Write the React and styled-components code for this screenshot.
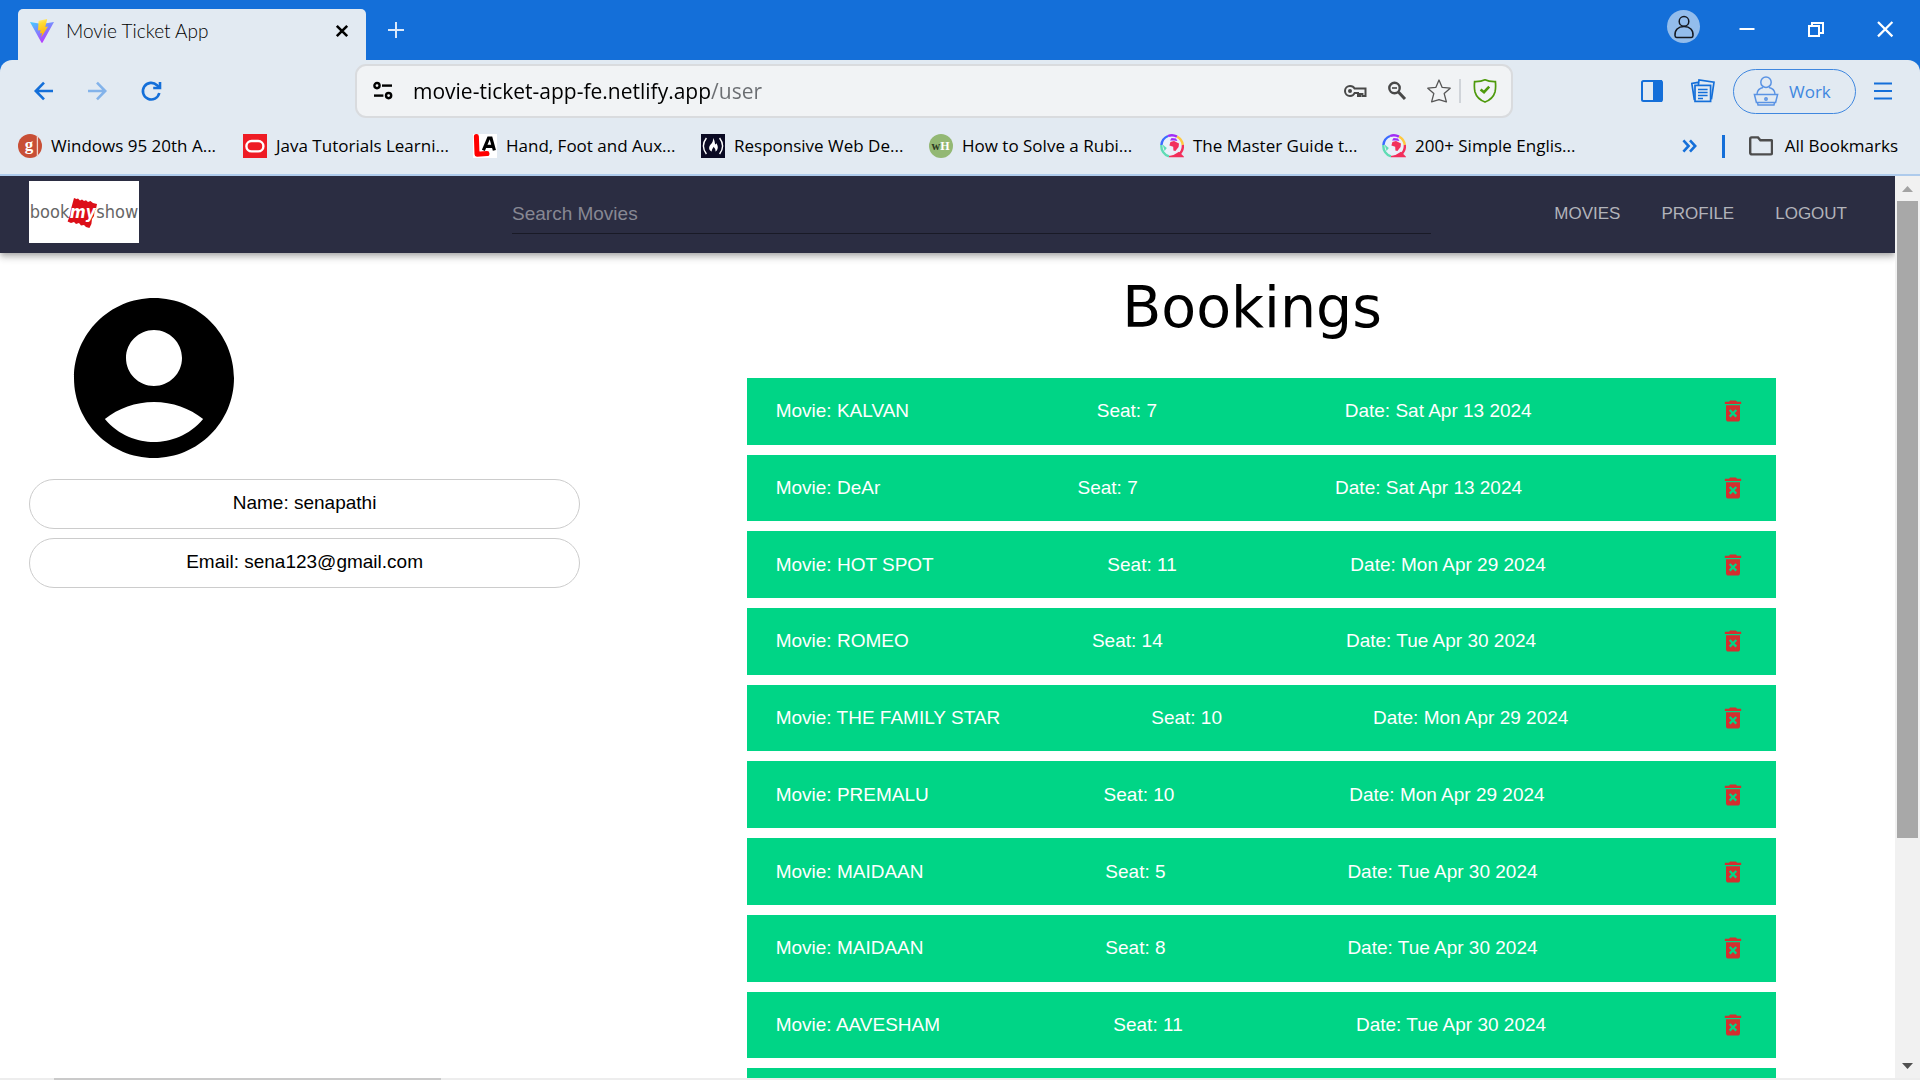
import React from "react";
import styled, { createGlobalStyle } from "styled-components";

const BLUE = "#146fd9";
const CHROME = "#e2eaf2";
const UI = '"Open Sans", "Noto Sans", sans-serif';
const ARIAL = '"Liberation Sans", Arial, sans-serif';

const GlobalStyle = createGlobalStyle`
  *, *::before, *::after { box-sizing: border-box; }
  html, body { margin: 0; padding: 0; }
  body { background: #fff; overflow: hidden; font-family: ${ARIAL}; color: #000; }
  button { border: 0; background: none; padding: 0; margin: 0; font: inherit; color: inherit; cursor: pointer; }
  a { color: inherit; text-decoration: none; }
  svg { display: block; flex: none; }
`;

const Window = styled.div`
  display: flex;
  flex-direction: column;
  height: 100vh;
`;

/* ---------- browser frame ---------- */

const Frame = styled.header`
  flex: none;
  background: ${BLUE};
  font-family: ${UI};
`;

const TabStrip = styled.div`
  display: flex;
  align-items: flex-end;
  height: 60px;
  padding-left: 18px;
`;

const Tab = styled.div`
  display: flex;
  align-items: center;
  width: 348px;
  height: 51px;
  padding: 0 17px 8px 12px;
  gap: 12px;
  background: ${CHROME};
  border-radius: 5px 5px 0 0;
`;

const TabTitle = styled.span`
  flex: 1;
  font-family: Lato, ${UI};
  font-size: 19px;
  font-weight: 300;
  line-height: 24px;
`;

const IconButton = styled.button`
  display: flex;
  align-items: center;
  justify-content: center;
  flex: none;
  width: ${(p) => p.$size || 24}px;
  height: ${(p) => p.$size || 24}px;
  color: ${(p) => p.$color || "inherit"};
`;

const NewTab = styled(IconButton)`
  margin: 0 0 18px 18px;
`;

const WindowControls = styled.div`
  display: flex;
  align-items: flex-start;
  align-self: flex-start;
  margin-left: auto;
  padding: 10px 23px 0 0;
`;

const Controls = styled.div`
  display: flex;
  gap: 45px;
  padding: 7px 0 0 35px;
`;

const ProfileBadge = styled.button`
  display: flex;
  align-items: center;
  justify-content: center;
  width: 33px;
  height: 33px;
  border-radius: 50%;
  background: #93bdec;
`;

const Bars = styled.div`
  background: ${CHROME};
  border-radius: 12px 12px 0 0;
  border-bottom: 2px solid #aecbec;
  padding-bottom: 4px;
`;

const Toolbar = styled.div`
  display: grid;
  grid-template-columns: 355px 1fr 407px;
  align-items: center;
  height: 62px;
`;

const NavButtons = styled.div`
  display: flex;
  gap: 30px;
  padding-left: 31px;
`;

const AddressBar = styled.div`
  display: flex;
  align-items: center;
  height: 54px;
  padding: 0 14px 0 16px;
  background: #f1f3f5;
  border: 2px solid #d9dbde;
  border-radius: 11px;
`;

const Url = styled.input`
  flex: 1;
  min-width: 0;
  height: 32px;
  margin-left: 20px;
  padding: 0;
  border: 0;
  outline: 0;
  font-family: ${UI};
  font-size: 21px;
  color: transparent;
  background: linear-gradient(90deg, #000 298px, #6a6d71 298px);
  -webkit-background-clip: text;
  background-clip: text;
`;

const AddressActions = styled.div`
  display: flex;
  align-items: center;
  gap: 18px;
`;

const ShieldSlot = styled.div`
  display: flex;
  align-items: center;
  height: 24px;
  margin-left: 8px;
  padding-left: 12px;
  border-left: 2px solid #d0d4d9;
`;

const RightTools = styled.div`
  display: flex;
  align-items: center;
  justify-content: flex-end;
  padding-right: 27px;
  color: ${BLUE};
`;

const ToolPair = styled.div`
  display: flex;
  gap: 26px;
  margin-right: 18px;
`;

const WorkButton = styled.button`
  display: flex;
  align-items: center;
  gap: 10px;
  width: 123px;
  height: 45px;
  margin-right: 17px;
  padding-left: 19px;
  border: 1px solid #3f87df;
  border-radius: 23px;
  color: #3f87df;
  font-size: 17px;
`;

const BookmarksBar = styled.nav`
  display: flex;
  align-items: center;
  height: 48px;
  padding: 0 22px 0 18px;
`;

const Bookmark = styled.a`
  display: flex;
  align-items: center;
  gap: 9px;
  width: ${(p) => p.$width}px;
  font-size: 17px;
  line-height: 24px;
  white-space: nowrap;
`;

const BookmarksEnd = styled.div`
  display: flex;
  align-items: center;
  margin-left: auto;
  color: ${BLUE};
`;

const Separator = styled.span`
  width: 3px;
  height: 23px;
  margin: 0 24px;
  background: ${BLUE};
`;

const AllBookmarks = styled.button`
  display: flex;
  align-items: center;
  gap: 12px;
  color: #000;
  font-size: 17px;
  line-height: 24px;
`;

/* ---------- web page ---------- */

const Viewport = styled.div`
  display: flex;
  flex: 1;
  min-height: 0;
`;

const Page = styled.div`
  flex: 1;
  min-width: 0;
  overflow: hidden;
`;

const AppBar = styled.div`
  display: flex;
  align-items: center;
  height: 77px;
  padding: 0 48px 0 29px;
  background: #2b2d42;
  box-shadow: 0 2px 5px -1px rgba(0, 0, 0, 0.2), 0 5px 6px rgba(0, 0, 0, 0.14),
    0 1px 12px rgba(0, 0, 0, 0.12);
`;

const Logo = styled.a`
  display: flex;
  align-items: center;
  justify-content: center;
  flex: none;
  width: 110px;
  height: 62px;
  margin-bottom: 5px;
  background: #fff;
  color: #666;
  font-family: "Liberation Sans Narrow", "DejaVu Sans Condensed", sans-serif;
  font-size: 18px;
  line-height: 24px;
`;

const LogoTicket = styled.span`
  position: relative;
  display: flex;
  justify-content: center;
  width: 27px;
  color: #fff;
  font-weight: 700;
  font-style: italic;
  font-size: 17px;

  svg { position: absolute; left: -2px; top: -3px; }
  span { position: relative; }
`;

const SearchField = styled.label`
  display: flex;
  flex: 1;
  margin: 0 123px 0 373px;
`;

const SearchInput = styled.input`
  width: 100%;
  height: 38px;
  padding: 0;
  border: 0;
  border-bottom: 1px solid #191a26;
  outline: 0;
  background: none;
  color: #fff;
  font-family: ${ARIAL};
  font-size: 19px;

  &::placeholder { color: #878893; opacity: 1; }
`;

const Menu = styled.nav`
  display: flex;
  gap: 41px;
  padding-bottom: 2px;
  font-size: 17px;
  line-height: 28px;
  color: #b2b3ba;
`;

const Content = styled.main`
  display: grid;
  grid-template-columns: 9fr 19fr;
`;

const ProfilePanel = styled.section`
  padding: 29px;
`;

const AvatarIcon = styled.svg`
  width: 192px;
  height: 192px;
  margin: 0 0 5px 29px;
`;

const InfoPill = styled.p`
  height: 50px;
  margin: 0 0 9px;
  padding-top: 9px;
  border: 1px solid #ccc;
  border-radius: 25px;
  font-size: 19px;
  line-height: 28px;
  text-align: center;
`;

const BookingsPanel = styled.section`
  padding-top: 20px;
`;

const Heading = styled.h1`
  margin: 0 0 37px;
  font-family: "DejaVu Sans", Verdana, sans-serif;
  font-size: 57px;
  font-weight: 400;
  line-height: 68px;
  text-align: center;
`;

const BookingList = styled.ul`
  display: grid;
  grid-auto-rows: 1fr;
  gap: 10px;
  width: calc(80% + 1px);
  min-height: 757px;
  margin: 0 0 0 calc(10% + 9px);
  padding: 0;
  list-style: none;
`;

const BookingRow = styled.li`
  display: flex;
  align-items: center;
  justify-content: space-between;
  padding: 0 29px;
  background: #00d586;
  color: #fff;
  font-size: 19px;
`;

const Cell = styled.span`
  line-height: 28px;
`;

const ScrollTrack = styled.div`
  display: flex;
  flex-direction: column;
  align-items: center;
  flex: none;
  width: 25px;
  background: #f1f1f1;
`;

const ScrollThumb = styled.div`
  width: 21px;
  flex: 637 1 0;
  background: #a8a8a8;
`;

const ScrollRest = styled.div`
  flex: 215 1 0;
`;

const Taskbar = styled.div`
  flex: none;
  height: 2px;
  padding-left: 54px;
  background: #ededed;
`;

const TaskSearch = styled.div`
  width: 387px;
  height: 2px;
  background: #cacaca;
`;

/* ---------- icons ---------- */

const Line = ({ s = 24, w = 2, children, ...rest }) => (
  <svg width={s} height={s} viewBox={`0 0 ${s} ${s}`} fill="none" stroke="currentColor" strokeWidth={w} aria-hidden="true" {...rest}>
    {children}
  </svg>
);

const ViteIcon = () => (
  <svg width="24" height="24" viewBox="0 0 24 24" aria-hidden="true">
    <defs>
      <linearGradient id="va" x1="0" y1="0" x2="0.6" y2="1"><stop stopColor="#41d1ff" /><stop offset="1" stopColor="#bd34fe" /></linearGradient>
      <linearGradient id="vb" x1="0.4" y1="0" x2="0.6" y2="1"><stop stopColor="#ffea83" /><stop offset="0.2" stopColor="#ffdd35" /><stop offset="1" stopColor="#ffa800" /></linearGradient>
    </defs>
    <path d="M0 3 L12 5 L24 3 L12.6 23.6 Q12 24.4 11.4 23.6 Z" fill="url(#va)" />
    <path d="M17.2 0 L8.6 1.7 L8 11.5 L10.6 11 L9.9 14.6 L12 14 L11.2 18.4 L18 7.6 L15.3 8 Z" fill="url(#vb)" />
  </svg>
);

const ReloadIcon = () => (
  <Line w={2.6}>
    <path d="M20.3 14 A8.3 8.3 0 1 1 18 6.2 L20 8.2" />
    <path d="M21 3 V9 H14.2" />
  </Line>
);

const TuneIcon = () => (
  <Line s={20} w={2.4}>
    <circle cx="4" cy="4.6" r="2.6" /><path d="M9 4.6 H19" />
    <circle cx="15.6" cy="14.6" r="2.6" /><path d="M1 14.6 H10.4" />
  </Line>
);

const KeyIcon = () => (
  <Line w={2}>
    <path d="M7 7 a5 5 0 1 0 0 10 c2.2 0 3.8-1 4.6-3 H15 v3 h2 v-2 h2.4 v2 H22.5 V9.6 H11.6 C10.8 8 9.2 7 7 7 Z" />
    <circle cx="7" cy="12" r="1" fill="currentColor" />
  </Line>
);

const ZoomOutIcon = () => (
  <Line w={2.4}>
    <circle cx="9.5" cy="9" r="5.2" /><path d="M7 9 H12" strokeWidth="1.6" /><path d="M13.4 13 L20 20" strokeWidth="3" />
  </Line>
);

const StarIcon = () => (
  <Line w={1.3}>
    <path d="M12 1 L15.2 8.4 L23.2 9.2 L17.2 14.6 L19.4 22.8 L12 20.6 L4.6 22.8 L6.8 14.6 L0.8 9.2 L8.8 8.4 Z" strokeLinejoin="round" />
  </Line>
);

const ShieldIcon = () => (
  <Line w={1.7}>
    <path d="M12 0.8 Q16 2.8 22.4 2.6 Q23 9 22 13 Q20 20 12 23 Q4 20 2 13 Q1 9 1.6 2.6 Q8 2.8 12 0.8 Z" />
    <path d="M7.6 10.4 L11 13.2 L16.2 7.6" strokeWidth="2.6" />
  </Line>
);

const SidebarIcon = () => (
  <Line w={2}>
    <rect x="1" y="2" width="20" height="20" rx="1.5" /><path d="M13 2 H20 V22 H13 Z" fill="currentColor" />
  </Line>
);

const ReadingIcon = () => (
  <Line w={1.7}>
    <rect x="4" y="6.4" width="15.6" height="16" /><path d="M3.4 21 L0.8 4.4 L7 3.4 M7.4 6 L8 1 L23 3.2 L20.4 20.4" />
    <path d="M7 10.4 H16.6 M7 13.4 H16.6 M7 16.4 H16.6 M7 19.4 H12" strokeWidth="1.5" />
  </Line>
);

const WorkIcon = () => (
  <svg width="26" height="30" viewBox="0 0 26 30" fill="none" stroke="#5a93e4" strokeWidth="1.5" aria-hidden="true">
    <circle cx="13" cy="6.2" r="5.2" />
    <path d="M4 17.8 C4.4 14 7 12 10 11.4 M16 11.4 C19 12 21.6 14 22 17.8" />
    <path d="M1.4 18.4 H24.6 L22.6 26.4 H3.4 Z M4.4 26.4 L5 29 H21 L21.6 26.4" />
    <circle cx="13" cy="23" r="1.2" />
  </svg>
);

const FolderIcon = () => (
  <Line w={2.4} stroke="#4d4d4d">
    <path d="M2.6 3.4 H9 L11.4 6.2 H22.4 Q23 6.2 23 7 V19 Q23 20.4 21.4 20.4 H3 Q1.2 20.4 1.2 18.8 V5 Q1.2 3.4 2.6 3.4 Z" />
  </Line>
);

const DeleteIcon = () => (
  <svg width="28" height="28" viewBox="0 0 24 24" fill="#d32f2f" aria-hidden="true">
    <path d="M6 19c0 1.1.9 2 2 2h8c1.1 0 2-.9 2-2V7H6zm2.46-7.12 1.41-1.41L12 12.59l2.12-2.12 1.41 1.41L13.41 14l2.12 2.12-1.41 1.41L12 15.41l-2.12 2.12-1.41-1.41L10.59 14zM15.5 4l-1-1h-5l-1 1H5v2h14V4z" />
  </svg>
);

const svg24 = { width: 24, height: 24, viewBox: "0 0 24 24", "aria-hidden": true };

const GoodIcon = () => (
  <svg {...svg24}>
    <circle cx="12" cy="12" r="12" fill="#c84f36" />
    <path d="M19.4 1.5 V22.5" stroke="#f0d2ca" strokeWidth="1.3" />
    <text x="11" y="16" fill="#fff" fontFamily="Liberation Serif, serif" fontSize="17" fontWeight="700" textAnchor="middle">g</text>
  </svg>
);
const OracleIcon = () => (
  <svg {...svg24}><rect width="24" height="24" fill="#ee1c25" /><rect x="3.4" y="7" width="17" height="10.4" rx="5.2" fill="none" stroke="#fff" strokeWidth="2.4" /></svg>
);
const LAIcon = () => (
  <svg {...svg24}>
    <rect width="24" height="24" fill="#fff" />
    <path d="M3.4 2.6 L4 20.2 L14 19.6" stroke="#f00" strokeWidth="5" fill="none" strokeLinecap="round" strokeLinejoin="round" />
    <path d="M10.4 16.4 L15.6 4 H18 L21.4 16.4 M12.6 12.4 H20" stroke="#000" strokeWidth="3.2" fill="none" />
  </svg>
);
const CampIcon = () => (
  <svg {...svg24}>
    <rect width="24" height="24" fill="#0a0a23" />
    <path d="M5.4 4 Q-0.6 12 5.4 20 M18.6 4 Q24.6 12 18.6 20" stroke="#fff" strokeWidth="1.4" fill="none" />
    <path d="M12 4 C14.4 7.4 13.4 9.4 14.6 10.6 C15.4 10 15 9 15 9 C17.6 11.6 17.4 16 14.4 17.6 C15 15.4 13.4 14 12.6 12.8 C12.4 14.4 10.4 15 10.8 17.6 C7.6 16.4 7.4 13 9.6 10.6 C11.4 8.6 12.4 7 12 4 Z" fill="#fff" />
  </svg>
);
const WikiIcon = () => (
  <svg {...svg24}>
    <circle cx="12" cy="12" r="12" fill="#93b874" />
    <text x="2.6" y="16" fontFamily="Liberation Serif, serif" fontWeight="700" fontSize="12" fill="#2c3a22">w</text>
    <text x="11.2" y="16" fontFamily="Liberation Serif, serif" fontWeight="700" fontSize="12" fill="#fff">H</text>
  </svg>
);
const GlobeIcon = () => (
  <svg {...svg24} fill="none" strokeWidth="2.4">
    <circle cx="12" cy="12" r="10" fill="#eaf0fa" stroke="none" />
    <path d="M1.4 11 A10.8 10.8 0 0 1 8 2" stroke="#3b6bff" />
    <path d="M8 2 A10.8 10.8 0 0 1 17 2.6" stroke="#a02df5" />
    <path d="M17 2.6 A10.8 10.8 0 0 1 22.8 11" stroke="#ffc940" />
    <path d="M22.8 11 A10.8 10.8 0 0 1 19 20.4" stroke="#f22f5c" />
    <path d="M1.4 11 A10.8 10.8 0 0 0 9 22.4" stroke="#5fdcb4" />
    <path d="M9 22.6 H22.8 L19 18.6 Q15 22 9 22.6" fill="#f22f5c" stroke="#f22f5c" strokeWidth="1.4" />
    <path d="M10.4 8 L14 7 L19 9.4 L18.6 13 L15.4 17 L13.4 16.4 L13.2 12.8 L9.4 11.6 Z" fill="#f22f5c" />
    <path d="M10 6.6 L11.6 4 L16 4.4 L17.4 7 L14 6.4 Z" fill="#a02df5" />
    <path d="M2.6 10.6 L6.8 14 L4.6 17 Z" fill="#5fdcb4" />
  </svg>
);

/* ---------- data ---------- */

const BOOKMARKS = [
  { text: "Windows 95 20th A...", Icon: GoodIcon, width: 225 },
  { text: "Java Tutorials Learni...", Icon: OracleIcon, width: 230 },
  { text: "Hand, Foot and Aux...", Icon: LAIcon, width: 228 },
  { text: "Responsive Web De...", Icon: CampIcon, width: 228 },
  { text: "How to Solve a Rubi...", Icon: WikiIcon, width: 231 },
  { text: "The Master Guide t...", Icon: GlobeIcon, width: 222 },
  { text: "200+ Simple Englis...", Icon: GlobeIcon, width: 222 },
];

const BOOKINGS = [
  ["KALVAN", 7, "Sat Apr 13 2024"],
  ["DeAr", 7, "Sat Apr 13 2024"],
  ["HOT SPOT", 11, "Mon Apr 29 2024"],
  ["ROMEO", 14, "Tue Apr 30 2024"],
  ["THE FAMILY STAR", 10, "Mon Apr 29 2024"],
  ["PREMALU", 10, "Mon Apr 29 2024"],
  ["MAIDAAN", 5, "Tue Apr 30 2024"],
  ["MAIDAAN", 8, "Tue Apr 30 2024"],
  ["AAVESHAM", 11, "Tue Apr 30 2024"],
];

const BrowserFrame = () => (
  <Frame>
    <TabStrip>
      <Tab>
        <ViteIcon />
        <TabTitle>Movie Ticket App</TabTitle>
        <IconButton $size={14} aria-label="Close tab">
          <Line s={14} w={2.6}><path d="M1.8 1.8 L12.2 12.2 M12.2 1.8 L1.8 12.2" /></Line>
        </IconButton>
      </Tab>
      <NewTab $color="#dbe9fa" aria-label="New tab">
        <Line w={2}><path d="M12 4 V20 M4 12 H20" /></Line>
      </NewTab>
      <WindowControls>
        <ProfileBadge aria-label="Account">
          <Line w={1.5} stroke="#14181f">
            <circle cx="12" cy="6.4" r="4.8" /><path d="M3 20.6 C2.6 15 6 11.6 12 11.6 S21.4 15 21 20.6 Q21 22.4 19.4 22.4 H4.6 Q3 22.4 3 20.6 Z" />
          </Line>
        </ProfileBadge>
        <Controls>
          <IconButton $color="#fff" aria-label="Minimize"><Line><path d="M4.5 12 H19.5" /></Line></IconButton>
          <IconButton $color="#fff" aria-label="Restore"><Line><path d="M5 9 H15 V19 H5 Z M8 8 V6 H19 V16 H16" /></Line></IconButton>
          <IconButton $color="#fff" aria-label="Close"><Line w={2.2}><path d="M5 5 L19.4 19.4 M19.4 5 L5 19.4" /></Line></IconButton>
        </Controls>
      </WindowControls>
    </TabStrip>
    <Bars>
      <Toolbar>
        <NavButtons>
          <IconButton $color={BLUE} aria-label="Back"><Line w={2.6}><path d="M22 12 H5 M13 3.6 L4.8 12 L13 20.4" /></Line></IconButton>
          <IconButton $color="#83b3ea" aria-label="Forward"><Line w={2.6}><path d="M3 12 H20 M12 3.6 L20.2 12 L12 20.4" /></Line></IconButton>
          <IconButton $color={BLUE} aria-label="Reload"><ReloadIcon /></IconButton>
        </NavButtons>
        <AddressBar>
          <IconButton $size={20} aria-label="Site information"><TuneIcon /></IconButton>
          <Url aria-label="Address" defaultValue="movie-ticket-app-fe.netlify.app/user" spellCheck="false" />
          <AddressActions>
            <IconButton $color="#484848" aria-label="Passwords"><KeyIcon /></IconButton>
            <IconButton $color="#484848" aria-label="Zoom"><ZoomOutIcon /></IconButton>
            <IconButton $color="#555" aria-label="Bookmark this page"><StarIcon /></IconButton>
          </AddressActions>
          <ShieldSlot>
            <IconButton $color="#4e9a0c" aria-label="Secure page"><ShieldIcon /></IconButton>
          </ShieldSlot>
        </AddressBar>
        <RightTools>
          <ToolPair>
            <IconButton aria-label="Side panel"><SidebarIcon /></IconButton>
            <IconButton aria-label="Reading list"><ReadingIcon /></IconButton>
          </ToolPair>
          <WorkButton><WorkIcon />Work</WorkButton>
          <IconButton $size={20} aria-label="Menu"><Line s={20}><path d="M1 2.5 H19 M1 10 H19 M1 17.5 H19" /></Line></IconButton>
        </RightTools>
      </Toolbar>
      <BookmarksBar aria-label="Bookmarks">
        {BOOKMARKS.map(({ text, Icon, width }) => (
          <Bookmark key={text} href="#" $width={width}><Icon />{text}</Bookmark>
        ))}
        <BookmarksEnd>
          <IconButton $size={16} aria-label="More bookmarks">
            <Line s={16} w={2.6}><path d="M1.4 2.4 L6.6 8 L1.4 13.6 M8 2.4 L13.2 8 L8 13.6" /></Line>
          </IconButton>
          <Separator />
          <AllBookmarks><FolderIcon />All Bookmarks</AllBookmarks>
        </BookmarksEnd>
      </BookmarksBar>
    </Bars>
  </Frame>
);

const SiteHeader = () => (
  <AppBar>
    <Logo href="#" aria-label="bookmyshow">
      <span>book</span>
      <LogoTicket>
        <svg width="31" height="32" viewBox="0 0 31 32" aria-hidden="true">
          <path d="M7 1 L9.5 2 L11 1.4 L13 3.4 L15 2.4 L17 4 L19 3.2 L21 5 L23.4 4 L26 6 L30 7 L29 12 L27.6 14 L27 19 L25 22 L24.4 27 L22.4 31 L19 30 L17 28 L14 28.6 L12 26 L9 27 L7 25 L4 26 L0.6 24.4 L3 18 L4 12 Z" fill="#dc0f18" />
        </svg>
        <span>my</span>
      </LogoTicket>
      <span>show</span>
    </Logo>
    <SearchField>
      <SearchInput type="text" placeholder="Search Movies" aria-label="Search Movies" />
    </SearchField>
    <Menu aria-label="Site">
      <a href="#">MOVIES</a>
      <a href="#">PROFILE</a>
      <a href="#">LOGOUT</a>
    </Menu>
  </AppBar>
);

export default function App() {
  return (
    <Window>
      <GlobalStyle />
      <BrowserFrame />
      <Viewport>
        <Page>
          <SiteHeader />
          <Content>
            <ProfilePanel>
              <AvatarIcon viewBox="0 0 24 24" aria-hidden="true">
                <path d="M12 2C6.48 2 2 6.48 2 12s4.48 10 10 10 10-4.48 10-10S17.52 2 12 2m0 4c1.93 0 3.5 1.57 3.5 3.5S13.93 13 12 13s-3.5-1.57-3.5-3.5S10.07 6 12 6m0 14c-2.03 0-4.43-.82-6.14-2.88C7.55 15.8 9.68 15 12 15s4.45.8 6.14 2.12C16.43 19.18 14.03 20 12 20" />
              </AvatarIcon>
              <InfoPill>Name: senapathi</InfoPill>
              <InfoPill>Email: sena123@gmail.com</InfoPill>
            </ProfilePanel>
            <BookingsPanel>
              <Heading>Bookings</Heading>
              <BookingList>
                {BOOKINGS.map(([movie, seat, date], i) => (
                  <BookingRow key={i}>
                    <Cell>Movie: {movie}</Cell>
                    <Cell>Seat: {seat}</Cell>
                    <Cell>Date: {date}</Cell>
                    <IconButton $size={28} aria-label={`Delete ${movie}`}><DeleteIcon /></IconButton>
                  </BookingRow>
                ))}
                <BookingRow />
              </BookingList>
            </BookingsPanel>
          </Content>
        </Page>
        <ScrollTrack>
          <svg width="25" height="25" viewBox="0 0 25 25" aria-hidden="true"><path d="M7 16 H18 L12.5 10 Z" fill="#a3a3a3" /></svg>
          <ScrollThumb />
          <ScrollRest />
          <svg width="25" height="25" viewBox="0 0 25 25" aria-hidden="true"><path d="M7 10 H18 L12.5 16 Z" fill="#505050" /></svg>
        </ScrollTrack>
      </Viewport>
      <Taskbar><TaskSearch /></Taskbar>
    </Window>
  );
}
